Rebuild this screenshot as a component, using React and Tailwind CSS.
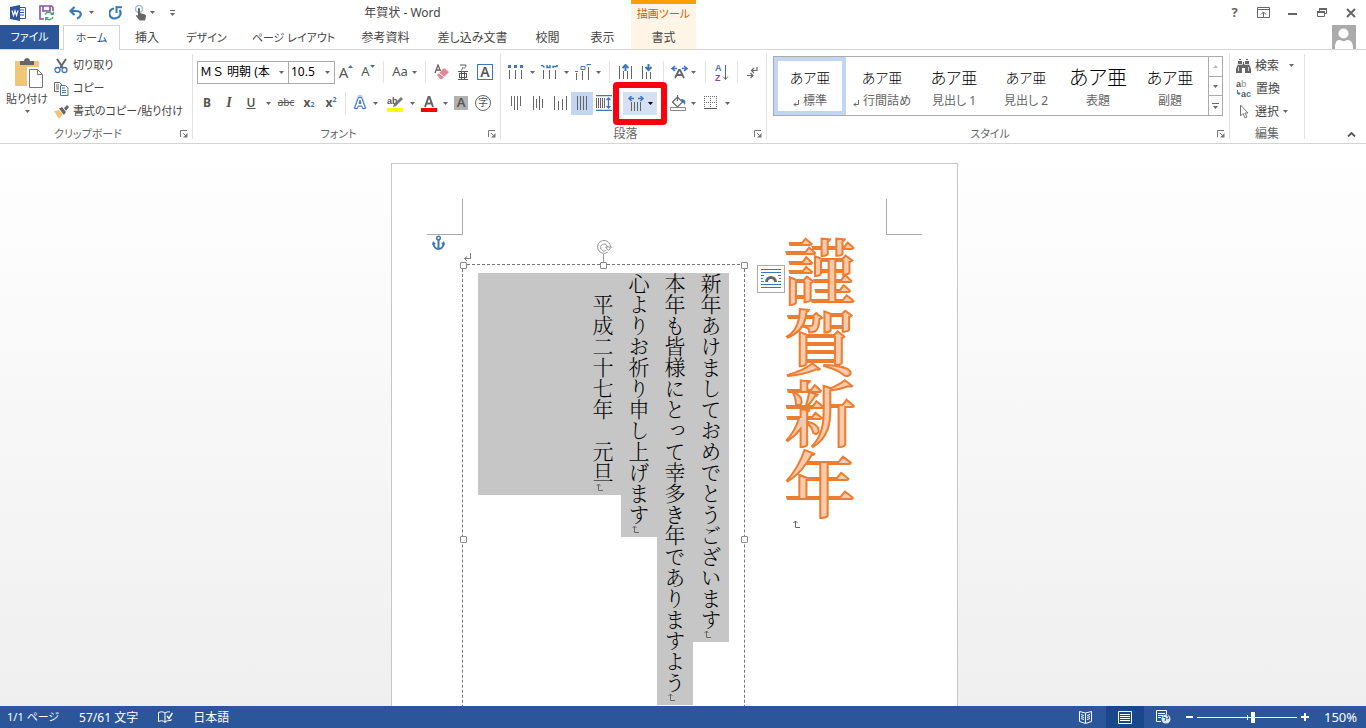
import React from 'react';
import clsx from 'clsx';

const TABS = [
  { name: '挿入', width: 'w-[52px]' },
  { name: 'デザイン', width: 'w-[67px] text-[11px]' },
  { name: 'ページ レイアウト', width: 'w-[107px] text-[11px]' },
  { name: '参考資料', width: 'w-[77px]' },
  { name: '差し込み文書', width: 'w-[97px]' },
  { name: '校閲', width: 'w-[53px]' },
  { name: '表示', width: 'w-[57px]' },
];

const STYLES = [
  { name: '標準', sample: 'text-sm', mark: true, selected: true },
  { name: '行間詰め', sample: 'text-sm', mark: true },
  { name: '見出し 1', sample: 'text-base' },
  { name: '見出し 2', sample: 'text-sm' },
  { name: '表題', sample: 'text-xl' },
  { name: '副題', sample: 'text-base' },
];

const LINES = [
  { text: '新年あけましておめでとうございます', width: 'w-[36px]' },
  { text: '本年も皆様にとって幸多き年でありますよう', width: 'w-[36px]' },
  { text: '心よりお祈り申し上げます', width: 'w-[36px]' },
  { text: '　平成二十七年　元旦', width: 'w-[143px]' },
];

const Icon = ({ w = 16, h = 16, className = '', children }) => (
  <svg width={w} height={h} viewBox={`0 0 ${w} ${h}`} fill="none" className={clsx('shrink-0', className)} aria-hidden="true">
    {children}
  </svg>
);

const Caret = ({ className = 'text-[#666]' }) => (
  <Icon w={5} h={3} className={className}>
    <path d="M0 0h5L2.500 3z" fill="currentColor" />
  </Icon>
);

const Tool = ({ label, width = 'w-[22px]', className = '', children }) => (
  <button type="button" aria-label={label} className={clsx('flex h-[23px] shrink-0 items-center justify-center', width, className)}>
    {children}
  </button>
);

const More = ({ label, width = 'w-3' }) => (
  <Tool label={`${label}のオプション`} width={width}>
    <Caret />
  </Tool>
);

const Separator = ({ className = '' }) => <div className={clsx('h-[22px] w-px shrink-0 bg-[#e1e1e1]', className)} />;

const Launcher = ({ label }) => (
  <button type="button" aria-label={`${label}の詳細`} className="flex h-4 w-4 items-center justify-center">
    <Icon w={8} h={8}>
      <path d="M.5 7V.5H7M3 3l3 3" stroke="#777" />
      <path d="M7.500 3v4.500H3z" fill="#777" />
    </Icon>
  </button>
);

const Group = ({ label, width, labelSize = 'text-[11px]', launcher = true, children }) => (
  <section className={clsx('my-1 flex shrink-0 flex-col border-r border-[#e1e1e1]', width)}>
    <div className="h-[74px] shrink-0">{children}</div>
    <div className="flex h-3 shrink-0 items-center">
      <span className={clsx('min-w-0 flex-1 text-center leading-4 text-[#666]', labelSize)}>{label}</span>
      {launcher && <Launcher label={label} />}
    </div>
  </section>
);

// Vertical rules used by the alignment and list icons
const Rules = ({ rows, x = 0, step = 4 }) => (
  <>
    {rows.map(([y, h], i) => (
      <rect key={i} x={x + i * step} y={y} width="1" height={h} fill="#666" />
    ))}
  </>
);

const ReturnMark = ({ className = '' }) => (
  <Icon w={8} h={9} className={className}>
    <path d="M7.500 0v5.500H2M4 3.500l-2.500 2L4 8" stroke="#777" />
  </Icon>
);

// Line end mark for vertical text
const LineMark = ({ className = '' }) => (
  <Icon w={8} h={8} className={className}>
    <path d="M2.500 1v6.500H7M.5 3l2-2 2 2" stroke="#666" />
  </Icon>
);

const TitleBar = () => (
  <header className="flex h-[25px] shrink-0">
    <div className="flex w-[631px]">
      <div className="flex w-[174px] items-center pl-2">
        <Tool label="Word" width="w-5">
          <Icon w={17} h={16}>
            <path d="M9.500 2.500h6v11h-6M10 5h4M10 7.500h4M10 10h4" stroke="#2b579a" />
            <path d="M0 2l10-2v16L0 14z" fill="#2b579a" />
            <path d="M2 5.500l1.500 5L5 6l1.500 4.500L8 5.500" stroke="#fff" strokeWidth="1.200" />
          </Icon>
        </Tool>
        <Tool label="上書き保存" width="w-[38px]">
          <Icon w={16} h={16}>
            <path d="M14 6V2.500L12.500 1H1v13h4M4 1v5h7V1" stroke="#8a50a8" strokeWidth="1.600" />
            <path d="M6 9.500a4 4 0 017-.5M14 12a4 4 0 01-7 1" stroke="#4fa27b" strokeWidth="1.500" />
            <path d="M15 6v4h-4zM6 16v-4h4z" fill="#4fa27b" />
          </Icon>
        </Tool>
        <Tool label="元に戻す" width="w-[19px]">
          <Icon w={15} h={14}>
            <path d="M2 5h6c4 0 5.500 2 4.500 4.500-.5 1.500-2 2.500-3.500 3M6.500 1l-4 4 4 4" stroke="#3c78b9" strokeWidth="2.200" />
          </Icon>
        </Tool>
        <More label="元に戻す" />
        <Tool label="やり直し" width="w-[38px]">
          <Icon w={14} h={14}>
            <path d="M5 2.500A5 5 0 107.500 12 5 5 0 0010.500 4" stroke="#3c78b9" strokeWidth="2.200" />
            <path d="M7.500 0v7M7.500 1.200H13" stroke="#3c78b9" strokeWidth="2" />
          </Icon>
        </Tool>
        <Tool label="タッチ/マウス モードの切り替え" width="w-[10px]">
          <Icon w={13} h={16}>
            <circle cx="5" cy="4" r="3.500" stroke="#9dbfe1" strokeWidth="1.500" />
            <path d="M4 4c0-1.500 2-1.500 2 0v4l5 1.500c1 .5 1 1 1 2l-1 4H5.500L2 11c0-1 1-1.500 2 0z" fill="#666" />
          </Icon>
        </Tool>
        <More label="モード" width="w-[14px]" />
        <Tool label="クイック アクセス ツール バー" width="w-[26px]">
          <Icon w={5} h={6}>
            <path d="M0 .5h5" stroke="#666" />
            <path d="M0 3h5L2.500 6z" fill="#666" />
          </Icon>
        </Tool>
      </div>
      <h1 className="flex-1 self-center text-center text-xs">年賀状 - Word</h1>
    </div>
    <div className="w-[65px] border-t-4 border-[#ff9e00] bg-[#fef5e7] pt-px text-center text-[11px] leading-[18px] text-[#d35d00]">描画ツール</div>
    <div className="ml-auto flex items-center">
      <Tool label="ヘルプ" width="w-[29px]">
        <span className="text-[13px] font-bold text-[#666]">?</span>
      </Tool>
      <Tool label="リボンの表示オプション" width="w-[29px]">
        <Icon w={13} h={11}>
          <path d="M.5.5h12v10H.5zM.5 2.500h12M6.500 10V5M4 7.500L6.500 5 9 7.500" stroke="#666" />
        </Icon>
      </Tool>
      <Tool label="最小化" width="w-[29px]">
        <span className="mt-0.5 h-0.5 w-[9px] bg-[#666]" />
      </Tool>
      <Tool label="元に戻す (縮小)" width="w-[29px]">
        <Icon w={10} h={9}>
          <path d="M2.500 3V.5h7v5H7M.5 3.500h7v5h-7z" stroke="#666" />
          <path d="M0 4h8M2 1h8" stroke="#666" strokeWidth="2" />
        </Icon>
      </Tool>
      <Tool label="閉じる" width="w-[30px]">
        <Icon w={10} h={10}>
          <path d="M1 1l8 8M9 1L1 9" stroke="#666" strokeWidth="2" />
        </Icon>
      </Tool>
    </div>
  </header>
);

const RibbonTabs = () => (
  <nav className="flex h-[25px] shrink-0 border-b border-[#d4d4d4]">
    <button type="button" className="w-[59px] bg-[#2b579a] pt-px text-[11px] text-white">ファイル</button>
    <button type="button" className="-mb-px ml-1 w-[57px] border border-b-0 border-[#d4d4d4] bg-white text-[11px] text-[#2b579a]">ホーム</button>
    <div className="flex pl-px">
      {TABS.map((tab) => (
        <button key={tab.name} type="button" className={clsx('pt-0.5 whitespace-nowrap', tab.width)}>{tab.name}</button>
      ))}
    </div>
    <button type="button" className="w-[65px] bg-[#fef5e7] pt-0.5">書式</button>
    <div className="ml-auto w-[34px]">
      <Icon w={24} h={24}>
        <path d="M0 0h24v24H0z" fill="#ababab" />
        <circle cx="11.500" cy="8.500" r="5" fill="#fff" />
        <path d="M3 24c0-8 2-9 5-9 2 1.500 5 1.500 7 0 4 0 6 2 6 9z" fill="#fff" />
      </Icon>
    </div>
  </nav>
);

const ClipboardGroup = () => (
  <Group label="クリップボード" width="w-[193px]">
    <div className="flex text-[11px]">
      <button type="button" className="flex w-[54px] flex-col items-center whitespace-nowrap pt-1">
        <Icon w={28} h={30} className="ml-1">
          <path d="M0 3h24v25H0z" fill="#f0c779" />
          <path d="M5 3h4c0-4 6-4 6 0h4v4H5z" fill="#666" />
          <path d="M12 9h16v21H12z" fill="#fff" />
          <path d="M14.500 11.500h8l5 5v13h-13z" fill="#fff" stroke="#777" />
          <path d="M22.500 11.500v5h5" stroke="#777" />
        </Icon>
        <span className="leading-[22px]">貼り付け</span>
        <Caret />
      </button>
      <div className="flex flex-col whitespace-nowrap">
        <button type="button" className="flex h-[23px] items-center gap-1">
          <Icon w={15} h={16}>
            <path d="M3 1l6 9M12 1L6 10" stroke="#666" strokeWidth="2" />
            <circle cx="3.500" cy="12" r="2.500" stroke="#3c78b9" strokeWidth="1.300" />
            <circle cx="10.500" cy="12" r="2.500" stroke="#3c78b9" strokeWidth="1.300" />
          </Icon>
          切り取り
        </button>
        <button type="button" className="flex h-[23px] items-center gap-1">
          <Icon w={15} h={14}>
            <path d="M5 9.500H.5v-9h5L8 3M2 3h3M2 5h3M2 7h3" stroke="#666" />
            <path d="M6.500 3.500h5L14 6v7.500H6.500zM8 6h3M8 8.500h4M8 10.500h4" stroke="#3c78b9" />
          </Icon>
          コピー
        </button>
        <button type="button" className="flex h-[23px] items-center gap-1">
          <Icon w={15} h={14}>
            <path d="M0 6l5-1 4 4-4 5z" fill="#f0c779" />
            <path d="M5 3.500l3-1.500 4 5-2 3zM10 3l3-3 2 2-3 4z" fill="#666" />
          </Icon>
          書式のコピー/貼り付け
        </button>
      </div>
    </div>
  </Group>
);

const Combo = ({ label, options, className }) => (
  <div className={clsx('flex h-[23px] items-center border border-[#ababab] bg-white', className)}>
    <select aria-label={label} className="h-full min-w-0 flex-1 appearance-none overflow-hidden whitespace-nowrap pl-0.5 text-xs text-black outline-none [font-feature-settings:normal]">
      {options.map((option) => (
        <option key={option}>{option}</option>
      ))}
    </select>
    <span className="flex w-[13px] justify-center"><Caret /></span>
  </div>
);

const FontGroup = () => (
  <Group label="フォント" width="w-[308px]">
    <div className="flex h-8 items-center pt-1 pl-1 text-[#555]">
      <Combo label="フォント名" options={['ＭＳ 明朝 (本', '游ゴシック']} className="w-[92px]" />
      <Combo label="フォント サイズ" options={['10.5', '11', '12']} className="-ml-px w-[47px]" />
      <Tool label="フォント サイズの拡大">
        <span className="text-[15px]">A</span>
        <Icon w={5} h={3} className="mb-3"><path d="M0 3h5L2.500 0z" fill="#3c78b9" /></Icon>
      </Tool>
      <Tool label="フォント サイズの縮小">
        <span className="text-[13px]">A</span>
        <Icon w={5} h={3} className="mb-3"><path d="M0 0h5L2.500 3z" fill="#3c78b9" /></Icon>
      </Tool>
      <Separator className="ml-1" />
      <Tool label="文字種の変換" width="w-[41px]" className="gap-1">
        <span className="text-[13px]">Aa</span>
        <Caret />
      </Tool>
      <Separator />
      <Tool label="書式のクリア" width="w-[26px]" className="pl-1">
        <Icon w={15} h={16}>
          <path d="M1 9L4 1l2.500 6M2 6h4" stroke="#666" strokeWidth="1.300" />
          <path d="M3 11l7-7 5 4-7 7H6z" fill="#e58796" />
          <path d="M5 9l5 4" stroke="#fff" />
        </Icon>
      </Tool>
      <Tool label="ルビ">
        <Icon w={10} h={16}>
          <path d="M2 1h6c0 2-1 3-2 3M5 3c0 2-1 3-2 3" stroke="#555" />
          <path d="M0 7.500h10M0 15.500h10M1.500 10v3M8.500 10v3M1 9.500h8M1 13.500h8M3.500 8v7M6.500 8v7" stroke="#555" />
        </Icon>
      </Tool>
      <Tool label="囲み線">
        <span className="flex h-4 w-4 items-center justify-center border border-[#3c78b9] text-sm font-semibold">A</span>
      </Tool>
    </div>
    <div className="flex h-8 items-center pt-0.5 pl-[3px] text-[#555]">
      <Tool label="太字" className="text-xs font-bold">B</Tool>
      <Tool label="斜体" className="font-['Liberation_Serif',serif] text-sm font-bold italic">I</Tool>
      <Tool label="下線" className="text-xs font-semibold underline">U</Tool>
      <More label="下線" />
      <Tool label="取り消し線" width="w-6" className="text-[10px] line-through">abc</Tool>
      <Tool label="下付き" className="text-xs font-bold">x<sub className="text-[7px] text-[#3c78b9]">2</sub></Tool>
      <Tool label="上付き" className="text-xs font-bold">x<sup className="text-[7px] text-[#3c78b9]">2</sup></Tool>
      <Separator className="ml-[3px]" />
      <Tool label="文字の効果" width="w-6" className="pl-1">
        <Icon w={16} h={16}>
          <path d="M3 14L7.500 2h1L13 14M5 10h6" stroke="#b5cfea" strokeWidth="4" />
          <path d="M2.500 13.500l4-11h3l4 11h-3l-.7-2.500H6.200l-.7 2.500zM7 8.500h2L8 5z" fill="#fff" stroke="#3c78b9" />
        </Icon>
      </Tool>
      <More label="文字の効果" width="w-[10px]" />
      <Tool label="蛍光ペンの色" className="ml-1">
        <Icon w={16} h={17}>
          <text x="0" y="9" fontSize="9" fontWeight="bold" fontFamily="Liberation Sans" fill="#555">ab</text>
          <path d="M7 9l7-7 2 2-7 7-3 1z" fill="#777" />
          <path d="M0 13h16v4H0z" fill="#ff0" />
        </Icon>
      </Tool>
      <More label="蛍光ペンの色" />
      <Tool label="フォントの色">
        <Icon w={16} h={17}>
          <path d="M4 12L7.500 2h1L12 12M5 8.500h6" stroke="#666" strokeWidth="2" />
          <path d="M0 13h16v4H0z" fill="#f00" />
        </Icon>
      </Tool>
      <More label="フォントの色" width="w-[10px]" />
      <Tool label="文字の網かけ">
        <span className="flex h-[14px] w-[14px] items-center justify-center bg-[#b1b1b1] text-[13px] font-semibold">A</span>
      </Tool>
      <Tool label="囲い文字">
        <span className="flex h-4 w-4 items-center justify-center rounded-full border border-[#666] text-[10px]">字</span>
      </Tool>
    </div>
  </Group>
);

const ParagraphGroup = () => (
  <Group label="段落" width="w-[266px]" labelSize="text-xs">
    <div className="flex h-8 items-center pt-1 pl-1">
      <Tool label="箇条書き" width="w-[21px]">
        <Icon w={15} h={15}>
          <path d="M0 0h3v3H0zM6 0h3v3H6zM12 0h3v3h-3z" fill="#3c78b9" />
          <Rules rows={[[5, 9], [5, 9], [5, 9]]} x={1} step={6} />
        </Icon>
      </Tool>
      <More label="箇条書き" />
      <Tool label="段落番号" width="w-[23px]">
        <Icon w={17} h={15}>
          <path d="M0 .5h1.500L3.500 2.500M6 0v2.500h3V0M12 3V1.500h4V0" stroke="#3c78b9" strokeWidth="1.500" />
          <Rules rows={[[5, 9], [5, 9], [5, 9]]} x={2} step={6} />
        </Icon>
      </Tool>
      <More label="段落番号" width="w-[10px]" />
      <Tool label="アウトライン" width="w-6">
        <Icon w={16} h={16}>
          <path d="M0 7.500h3M6 5.500h4v-3H6zM12 2V.5h4" stroke="#3c78b9" />
          <Rules rows={[[9, 7], [7, 9], [3, 13]]} x={1} step={6} />
        </Icon>
      </Tool>
      <More label="アウトライン" width="w-[7px]" />
      <Separator className="ml-[7px]" />
      <Tool label="インデントを減らす" width="w-[27px]" className="pl-1">
        <Icon w={13} h={16}>
          <Rules rows={[[2, 13], [7, 8], [7, 8], [2, 13]]} />
          <path d="M6.500 7V1M3.500 4l3-3 3 3" stroke="#3c78b9" strokeWidth="2" />
        </Icon>
      </Tool>
      <Tool label="インデントを増やす">
        <Icon w={12} h={16}>
          <Rules rows={[[2, 13], [8, 7], [8, 7], [2, 13]]} />
          <path d="M6.500 0v6M3.500 3l3 3 3-3" stroke="#3c78b9" strokeWidth="2" />
        </Icon>
      </Tool>
      <Separator className="ml-1" />
      <Tool label="拡張書式" width="w-[26px]" className="pl-1">
        <Icon w={17} h={14}>
          <path d="M4 1L1 3.500 4 6M1 3.500h5M13 1l3 2.500L13 6M11 3.500h5" stroke="#3c78b9" strokeWidth="1.500" />
          <path d="M4 13l4-8h1l4 8M5 10h7" stroke="#666" strokeWidth="1.800" />
        </Icon>
      </Tool>
      <More label="拡張書式" width="w-[6px]" />
      <Separator className="ml-[9px]" />
      <Tool label="並べ替え" width="w-[31px]">
        <Icon w={14} h={19}>
          <text x="0" y="8" fontSize="9" fontWeight="bold" fontFamily="Liberation Sans" fill="#3c78b9">A</text>
          <text x="0" y="18" fontSize="9" fontWeight="bold" fontFamily="Liberation Sans" fill="#8a50a8">Z</text>
          <path d="M10.500 2v14M8 13.500l2.500 3 2.500-3" stroke="#666" />
        </Icon>
      </Tool>
      <Separator />
      <Tool label="編集記号の表示" width="w-[29px]">
        <Icon w={11} h={13}>
          <path d="M10 1v3.500H5M7 2L4.500 4.500 7 7M0 9.500h6M3.500 7L6 9.500 3.500 12" stroke="#666" strokeWidth="1.200" />
        </Icon>
      </Tool>
    </div>
    <div className="flex h-8 items-center pt-0.5 pl-1">
      <Tool label="上揃え"><Icon w={11} h={15}><Rules rows={[[0, 10], [0, 14], [0, 14], [0, 10]]} step={3} /></Icon></Tool>
      <Tool label="上下中央揃え"><Icon w={11} h={15}><Rules rows={[[0, 14], [3, 9], [0, 14], [3, 9]]} step={3} /></Icon></Tool>
      <Tool label="下揃え"><Icon w={13} h={15}><Rules rows={[[0, 14], [5, 9], [3, 11], [0, 14]]} step={4} /></Icon></Tool>
      <Tool label="両端揃え" className="bg-[#c2d5f2]"><Icon w={11} h={15}><Rules rows={[[0, 14], [0, 14], [0, 14], [0, 14]]} step={3} /></Icon></Tool>
      <Tool label="均等割り付け">
        <Icon w={16} h={16}>
          <path d="M0 .5h16M0 15.500h16M12.500 3v10M10.500 5l2-2 2 2M10.500 11l2 2 2-2" stroke="#3c78b9" strokeWidth="1.300" />
          <Rules rows={[[3, 10], [3, 10], [3, 10], [3, 10], [3, 10]]} step={2} />
        </Icon>
      </Tool>
      <div className="relative ml-2 flex bg-[#d5e1f2]">
        <Tool label="行と段落の間隔" width="w-[34px]" className="gap-1">
          <Icon w={16} h={15}>
            <path d="M6 2.500H1M3.500 0L1 2.500 3.500 5M10 2.500h5M12.500 0L15 2.500 12.500 5" stroke="#3c78b9" strokeWidth="1.500" />
            <Rules rows={[[6, 9], [6, 9], [6, 9], [6, 9]]} x={3} step={3} />
          </Icon>
          <Caret className="text-black" />
        </Tool>
        <div className="pointer-events-none absolute -inset-[10px] rounded-sm border-[6px] border-[#fc0010]" />
      </div>
      <Tool label="塗りつぶし" width="w-[26px]" className="ml-2">
        <Icon w={16} h={16}>
          <path d="M2.500 7l5-5 5 5-5 5zM7.500 6V0" stroke="#666" strokeWidth="1.200" />
          <path d="M11 4c4 0 5 2 4 6.500-1-2-1-2.500-3-3.500z" fill="#3c78b9" />
          <path d="M.5 12.500h15v3H.5z" fill="#fff" stroke="#888" />
        </Icon>
      </Tool>
      <More label="塗りつぶし" width="w-1" />
      <Tool label="罫線" width="w-[30px]">
        <Icon w={13} h={14}>
          <path d="M.5 0v12M6.500 0v12M12.500 0v12M0 .5h13M0 6.500h13" stroke="#666" strokeDasharray="1 1" />
          <path d="M0 12.500h13" stroke="#555" />
        </Icon>
      </Tool>
      <More label="罫線" width="w-1" />
    </div>
  </Group>
);

const StylesGroup = () => (
  <Group label="スタイル" width="w-[463px]">
    <div className="mx-1.5 mt-0.5 flex h-[60px] border border-[#ababab]">
      {STYLES.map((style) => (
        <button
          key={style.name}
          type="button"
          className={clsx(
            'flex w-[72px] shrink-0 flex-col items-center overflow-hidden whitespace-nowrap border-4',
            style.selected ? 'border-[#c2d5f2]' : 'border-transparent'
          )}
        >
          <span className={clsx("flex h-8 items-center font-['Noto_Sans_CJK_JP',sans-serif] font-light text-black", style.sample)}>あア亜</span>
          <span className="flex items-center gap-1 text-[#666]">
            {style.mark && <Icon w={6} h={7} className="mt-1"><path d="M5.500 0v4.500H1M3 2.500l-2 2 2 2" stroke="#666" /></Icon>}
            {style.name}
          </span>
        </button>
      ))}
      <div className="ml-auto flex w-[14px] flex-col divide-y divide-[#ababab] border-l border-[#ababab]">
        <button type="button" aria-label="前の行" className="flex flex-1 items-center justify-center">
          <Icon w={5} h={3}><path d="M0 3h5L2.500 0z" fill="#bbb" /></Icon>
        </button>
        <button type="button" aria-label="次の行" className="flex flex-1 items-center justify-center"><Caret /></button>
        <button type="button" aria-label="その他" className="flex flex-1 items-center justify-center">
          <Icon w={7} h={6}>
            <path d="M0 .5h7" stroke="#666" />
            <path d="M1 3h5L3.500 6z" fill="#666" />
          </Icon>
        </button>
      </div>
    </div>
  </Group>
);

const EditGroup = () => (
  <Group label="編集" width="w-[75px]" labelSize="text-xs" launcher={false}>
    <div className="flex flex-col pl-1.5">
      <button type="button" className="flex h-[23px] items-center gap-1">
        <Icon w={15} h={14}>
          <path d="M2 2h4v3l1 1V3h1v3l1-1V2h4v3l2 5v4H9v-5H6v5H0v-4l2-5z" fill="#666" />
          <path d="M2 5.500h4M9 5.500h4M2.500 8v4M12.500 8v4" stroke="#fff" strokeWidth=".7" />
          <path d="M3 0h2v1H3zM10 0h2v1h-2z" fill="#666" />
        </Icon>
        検索
        <span className="pl-1.5"><Caret /></span>
      </button>
      <button type="button" className="flex h-[23px] items-center gap-1">
        <Icon w={16} h={20}>
          <text x="0" y="8" fontSize="9" fontWeight="bold" fontFamily="Liberation Sans" fill="#555">a<tspan fill="#aaa">b</tspan></text>
          <path d="M1.500 11v3.500H4M2.500 13L4 14.500 2.500 16" stroke="#3c78b9" />
          <text x="5" y="18" fontSize="9" fontWeight="bold" fontFamily="Liberation Sans" fill="#555">a<tspan fill="#3c78b9">c</tspan></text>
        </Icon>
        置換
      </button>
      <button type="button" className="flex h-[23px] items-center gap-1">
        <Icon w={15} h={16}>
          <path d="M4.500 1v11l2.500-2.500 2 4.500 2-1-2-4H12z" stroke="#777" />
        </Icon>
        選択
        <Caret />
      </button>
    </div>
  </Group>
);

const Ribbon = () => (
  <div className="flex h-[94px] shrink-0 overflow-hidden border-b border-[#d4d4d4] bg-white">
    <ClipboardGroup />
    <FontGroup />
    <ParagraphGroup />
    <StylesGroup />
    <EditGroup />
    <button type="button" aria-label="リボンを折りたたむ" className="mr-2.5 mb-1.5 ml-auto self-end">
      <Icon w={9} h={5}><path d="M1 4.500l3.500-3.500L8 4.500" stroke="#555" strokeWidth="1.800" /></Icon>
    </button>
  </div>
);

const Handle = ({ className }) => (
  <span className={clsx('absolute h-[7px] w-[7px] rounded-[1px] border border-[#8a8a8a] bg-white', className)} />
);

const TextFrame = () => (
  <div className="relative mt-[29px] h-[549px] w-[283px] shrink-0 border border-dashed border-[#777] pt-2 pr-[15px]">
    <div className="flex flex-row-reverse items-start">
      {LINES.map((line) => (
        <p
          key={line.text}
          className={clsx('shrink-0 bg-[#c6c6c6] text-[21px] leading-[36px] font-light whitespace-nowrap text-black [writing-mode:vertical-rl]', line.width)}
        >
          {line.text}
          <LineMark className="mb-1 -ml-4 inline-block" />
        </p>
      ))}
    </div>
    <ReturnMark className="absolute -top-3 left-0" />
    <Handle className="-top-[3px] -left-[3px]" />
    <Handle className="-top-[3px] left-[137px]" />
    <Handle className="-top-[3px] -right-1" />
    <Handle className="top-[271px] -left-[3px]" />
    <Handle className="top-[271px] -right-1" />
    <Icon w={16} h={22} className="absolute -top-[25px] left-[133px]">
      <path d="M12 12A6.500 6.500 0 1114.500 7M10.500 10A3.500 3.500 0 1111.500 7" stroke="#999" />
      <path d="M9.500 7H15.500L12.500 10.500z" fill="#fff" stroke="#999" />
      <path d="M7.500 14v8" stroke="#999" />
    </Icon>
  </div>
);

const Page = () => (
  <div className="h-[850px] w-[567px] shrink-0 border border-[#c6c6c6] bg-white font-['Noto_Serif_CJK_JP','Noto_Sans_CJK_JP',serif] [font-feature-settings:normal]">
    <div className="flex justify-between px-[35px] pt-[35px]">
      <div className="h-9 w-9 border-r border-b border-[#ababab]" />
      <div className="h-9 w-9 border-b border-l border-[#ababab]" />
    </div>
    <div className="flex items-start">
      <div className="w-[70px] shrink-0 pl-10">
        <Icon w={14} h={16}>
          <circle cx="6.500" cy="3" r="1.800" stroke="#3c78b9" strokeWidth="1.500" />
          <path d="M6.500 5v9M1.500 8c0 8 10 8 10 0" stroke="#3c78b9" strokeWidth="2" />
          <path d="M0 10l1-4 3 3zM13 10l-1-4-3 3z" fill="#3c78b9" />
        </Icon>
      </div>
      <TextFrame />
      <button type="button" aria-label="レイアウト オプション" className="mt-[30px] ml-3 flex h-7 w-7 shrink-0 items-center justify-center border border-[#ababab] bg-white">
        <Icon w={20} h={20}>
          <path d="M0 .5h20M0 3.500h20M0 6.500h3M17 6.500h3M0 9.500h2M18 9.500h2M0 12.500h3M17 12.500h3M0 15.500h20M0 18.500h20" stroke="#3c78b9" />
          <path d="M5.500 13c0-6 9-6 9 0" stroke="#666" strokeWidth="3" />
        </Icon>
      </button>
      <div className="w-[70px] shrink-0 pt-px">
        <p className="w-[70px] text-[71px] leading-[70px] font-semibold whitespace-nowrap text-[#f8cbad] [-webkit-text-stroke:2px_#ed7d31] [writing-mode:vertical-rl]">謹賀新年</p>
        <LineMark className="ml-2" />
      </div>
    </div>
  </div>
);

const StatusBar = () => (
  <footer className="flex h-[22px] shrink-0 items-center bg-[#2b579a] text-white">
    <div className="flex items-center gap-5 pt-px pl-[7px]">
      <span className="text-[11px]">1/1 ページ</span>
      <span>57/61 文字</span>
      <button type="button" aria-label="文章校正">
        <Icon w={15} h={13}>
          <path d="M7 12V2C5 .5 3 .5.500 1.500v9c2-1 4.500-1 6.500.5 1-1 3-1.500 6-1.500V8M7 2c1.500-1 3-1.500 5-1" stroke="#fff" />
          <path d="M9 5l2 2.500L14.500 2" stroke="#fff" strokeWidth="1.500" />
        </Icon>
      </button>
      <span>日本語</span>
    </div>
    <div className="ml-auto flex h-full items-center">
      <Tool label="閲覧モード" width="w-10">
        <Icon w={14} h={13}>
          <path d="M6.500 12.500L.5 10.500V.5l6 1.500 6-1.500v10zM6.500 2v10M2 3.500l3 1M2 5.500l3 1M2 7.500l3 1M8 4.500l3-1M8 6.500l3-1M8 8.500l3-1" stroke="#fff" />
        </Icon>
      </Tool>
      <button type="button" aria-label="印刷レイアウト" className="flex h-full w-[38px] items-center justify-center bg-[#19478a]">
        <Icon w={14} h={13}>
          <path d="M.5.5h13v12H.5zM2 3.500h10M2 5.500h10M2 7.500h10M2 9.500h10" stroke="#fff" />
        </Icon>
      </button>
      <Tool label="Web レイアウト" width="w-[38px]">
        <Icon w={15} h={14}>
          <path d="M5 11.500H.5V.5h10v4M2 3.500h7M2 5.500h5M2 7.500h3" stroke="#fff" />
          <circle cx="10" cy="9" r="4.500" fill="#dce6f4" />
          <path d="M7 7l3 1-1 3M11 5l2 3-2 1" stroke="#2b579a" />
        </Icon>
      </Tool>
      <button type="button" aria-label="縮小" className="ml-1 h-0.5 w-[7px] bg-white" />
      <div className="relative ml-1 flex h-3 items-center">
        <input
          type="range"
          aria-label="ズーム"
          min="0"
          max="100"
          defaultValue="56"
          className="h-3 w-[100px] appearance-none bg-transparent [&::-webkit-slider-runnable-track]:h-px [&::-webkit-slider-runnable-track]:bg-white [&::-webkit-slider-thumb]:-mt-[5px] [&::-webkit-slider-thumb]:h-[11px] [&::-webkit-slider-thumb]:w-1 [&::-webkit-slider-thumb]:appearance-none [&::-webkit-slider-thumb]:bg-white"
        />
        <span className="absolute left-[50px] h-[5px] w-px bg-white" />
      </div>
      <button type="button" aria-label="拡大" className="ml-1">
        <Icon w={8} h={8}><path d="M4 0v8M0 4h8" stroke="#fff" strokeWidth="2" /></Icon>
      </button>
      <span className="w-[57px] pt-px pl-[15px] text-[13px]">150%</span>
    </div>
  </footer>
);

export default function App() {
  return (
    <div className="flex h-screen flex-col overflow-hidden bg-white font-['Noto_Sans','Noto_Sans_CJK_JP',sans-serif] text-xs text-[#444] [font-feature-settings:'palt']">
      <TitleBar />
      <RibbonTabs />
      <Ribbon />
      <main className="flex min-h-0 flex-1 justify-center overflow-hidden bg-linear-to-b from-white to-[#efefef] pt-[19px] pr-[17px]">
        <Page />
      </main>
      <StatusBar />
    </div>
  );
}
